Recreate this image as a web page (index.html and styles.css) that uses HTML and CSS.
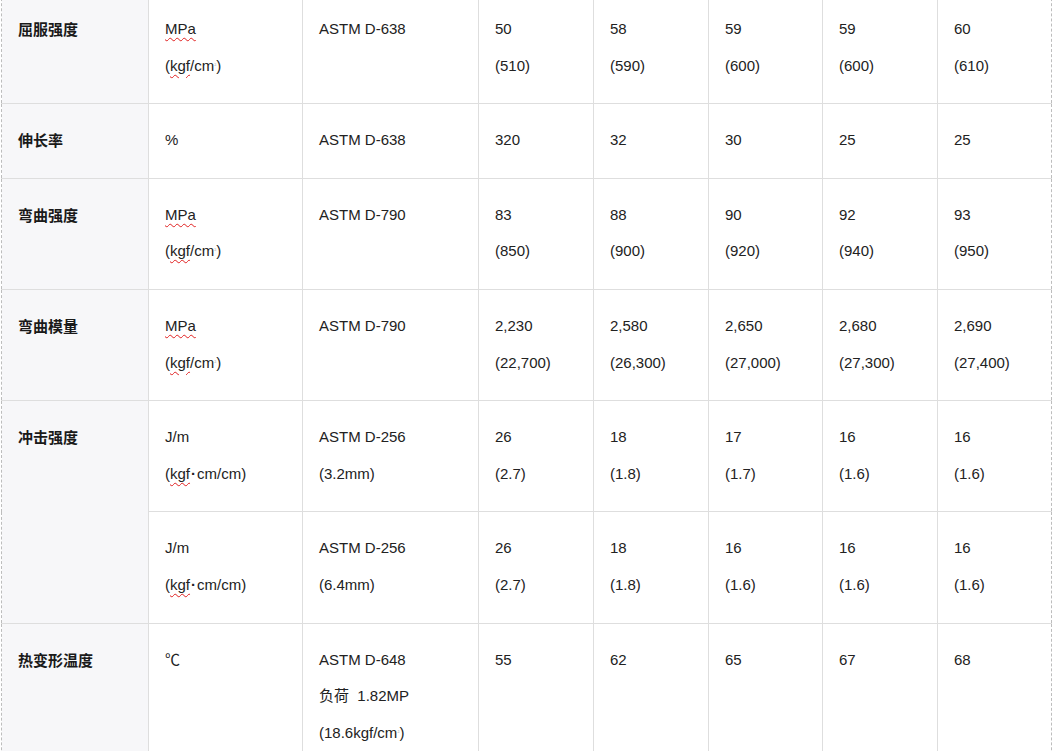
FILE: index.html
```html
<!DOCTYPE html>
<html lang="zh">
<head>
<meta charset="utf-8">
<title>物性表</title>
<link rel="stylesheet" href="styles.css">
</head>
<body>
<div class="wrap">
<table class="props">
  <colgroup>
    <col class="c1"><col class="c2"><col class="c3">
    <col class="cn"><col class="cn"><col class="cn6"><col class="cn"><col class="cn6">
  </colgroup>
  <tbody>
    <tr>
      <th><span class="l">屈服强度</span></th>
      <td><span class="l"><span class="sp">MPa</span></span><span class="l">(<span class="sp">kgf</span>/cm<sup>²</sup>)</span></td>
      <td><span class="l">ASTM D-638</span></td>
      <td><span class="l">50</span><span class="l">(510)</span></td>
      <td><span class="l">58</span><span class="l">(590)</span></td>
      <td><span class="l">59</span><span class="l">(600)</span></td>
      <td><span class="l">59</span><span class="l">(600)</span></td>
      <td class="last"><span class="l">60</span><span class="l">(610)</span></td>
    </tr>
    <tr>
      <th><span class="l">伸长率</span></th>
      <td><span class="l">%</span></td>
      <td><span class="l">ASTM D-638</span></td>
      <td><span class="l">320</span></td>
      <td><span class="l">32</span></td>
      <td><span class="l">30</span></td>
      <td><span class="l">25</span></td>
      <td class="last"><span class="l">25</span></td>
    </tr>
    <tr>
      <th><span class="l">弯曲强度</span></th>
      <td><span class="l"><span class="sp">MPa</span></span><span class="l">(<span class="sp">kgf</span>/cm<sup>²</sup>)</span></td>
      <td><span class="l">ASTM D-790</span></td>
      <td><span class="l">83</span><span class="l">(850)</span></td>
      <td><span class="l">88</span><span class="l">(900)</span></td>
      <td><span class="l">90</span><span class="l">(920)</span></td>
      <td><span class="l">92</span><span class="l">(940)</span></td>
      <td class="last"><span class="l">93</span><span class="l">(950)</span></td>
    </tr>
    <tr>
      <th><span class="l">弯曲模量</span></th>
      <td><span class="l"><span class="sp">MPa</span></span><span class="l">(<span class="sp">kgf</span>/cm<sup>²</sup>)</span></td>
      <td><span class="l">ASTM D-790</span></td>
      <td><span class="l">2,230</span><span class="l">(22,700)</span></td>
      <td><span class="l">2,580</span><span class="l">(26,300)</span></td>
      <td><span class="l">2,650</span><span class="l">(27,000)</span></td>
      <td><span class="l">2,680</span><span class="l">(27,300)</span></td>
      <td class="last"><span class="l">2,690</span><span class="l">(27,400)</span></td>
    </tr>
    <tr>
      <th rowspan="2"><span class="l">冲击强度</span></th>
      <td><span class="l">J/m</span><span class="l">(<span class="sp">kgf</span><span class="dot">·</span>cm/cm)</span></td>
      <td><span class="l">ASTM D-256</span><span class="l">(3.2mm)</span></td>
      <td><span class="l">26</span><span class="l">(2.7)</span></td>
      <td><span class="l">18</span><span class="l">(1.8)</span></td>
      <td><span class="l">17</span><span class="l">(1.7)</span></td>
      <td><span class="l">16</span><span class="l">(1.6)</span></td>
      <td class="last"><span class="l">16</span><span class="l">(1.6)</span></td>
    </tr>
    <tr>
      <td><span class="l">J/m</span><span class="l">(<span class="sp">kgf</span><span class="dot">·</span>cm/cm)</span></td>
      <td><span class="l">ASTM D-256</span><span class="l">(6.4mm)</span></td>
      <td><span class="l">26</span><span class="l">(2.7)</span></td>
      <td><span class="l">18</span><span class="l">(1.8)</span></td>
      <td><span class="l">16</span><span class="l">(1.6)</span></td>
      <td><span class="l">16</span><span class="l">(1.6)</span></td>
      <td class="last"><span class="l">16</span><span class="l">(1.6)</span></td>
    </tr>
    <tr>
      <th><span class="l">热变形温度</span></th>
      <td><span class="l">℃</span></td>
      <td><span class="l">ASTM D-648</span><span class="l">负荷&nbsp; 1.82MP</span><span class="l">(18.6kgf/cm<sup>²</sup>)</span></td>
      <td><span class="l">55</span></td>
      <td><span class="l">62</span></td>
      <td><span class="l">65</span></td>
      <td><span class="l">67</span></td>
      <td class="last"><span class="l">68</span></td>
    </tr>
  </tbody>
</table>
</div>
</body>
</html>
```
FILE: styles.css
```css
html, body {
  margin: 0;
  padding: 0;
  background: #ffffff;
}

body {
  font-family: "Liberation Sans", "Noto Sans CJK SC", sans-serif;
  font-size: 15px;
  color: #222222;
  overflow: hidden;
}

.wrap {
  padding-left: 1px;
  margin-top: -8px;
}

.props {
  border-collapse: collapse;
  table-layout: fixed;
  width: 1051px;
}

.c1 { width: 147px; }
.c2 { width: 154px; }
.c3 { width: 176px; }
.cn { width: 115px; }
.cn6 { width: 114px; }

.props th,
.props td {
  border: 1px solid #dedede;
  padding: 18px 16px 19px 16px;
  vertical-align: top;
  text-align: left;
  font-weight: normal;
}

.props th {
  background: #f7f7f9;
  font-family: "Noto Sans CJK SC", sans-serif;
  font-weight: 700;
  color: #1a1a1a;
  border-left: 1px dashed #bdbdbd;
}

.props td.last {
  border-right: 1px dashed #bdbdbd;
}

.l {
  display: block;
  line-height: 36.6px;
  white-space: nowrap;
}

.sp {
  text-decoration: underline wavy #e02020;
  text-decoration-thickness: 1px;
  text-underline-offset: 3px;
}

sup {
  font-size: 6px;
  color: #b8b8b8;
  vertical-align: 4px;
  line-height: 0;
}

.dot {
  font-weight: 700;
  padding: 0 1px;
}
```
